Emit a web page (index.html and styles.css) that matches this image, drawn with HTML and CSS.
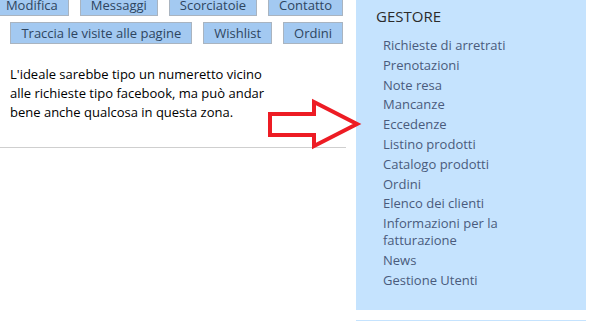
FILE: index.html
```html
<!DOCTYPE html>
<html lang="it">
<head>
  <meta charset="UTF-8" />
  <meta name="viewport" content="width=device-width, initial-scale=1.0"/>
  <title>Gestore</title>
  <link rel="stylesheet" href="styles.css">
</head>
<body>
  <div class="page">
    <div class="main">
      <nav class="toolbar">
        <div class="toolbar-row">
          <a class="tool-btn" href="#">Modifica</a>
          <a class="tool-btn" href="#">Messaggi</a>
          <a class="tool-btn" href="#">Scorciatoie</a>
          <a class="tool-btn" href="#">Contatto</a>
        </div>
        <div class="toolbar-row">
          <a class="tool-btn" href="#">Traccia le visite alle pagine</a>
          <a class="tool-btn" href="#">Wishlist</a>
          <a class="tool-btn" href="#">Ordini</a>
        </div>
      </nav>

      <p class="note">L'ideale sarebbe tipo un numeretto vicino alle richieste tipo facebook, ma può andar bene anche qualcosa in questa zona.</p>

      <hr class="divider">
    </div>

    <aside class="sidebar">
      <div class="panel">
        <h2 class="panel-title">GESTORE</h2>
        <ul class="menu">
          <li><a href="#">Richieste di arretrati</a></li>
          <li><a href="#">Prenotazioni</a></li>
          <li><a href="#">Note resa</a></li>
          <li><a href="#">Mancanze</a></li>
          <li><a href="#">Eccedenze</a></li>
          <li><a href="#">Listino prodotti</a></li>
          <li><a href="#">Catalogo prodotti</a></li>
          <li><a href="#">Ordini</a></li>
          <li><a href="#">Elenco dei clienti</a></li>
          <li><a href="#">Informazioni per la fatturazione</a></li>
          <li><a href="#">News</a></li>
          <li><a href="#">Gestione Utenti</a></li>
        </ul>
      </div>
      <div class="panel panel-next"></div>
    </aside>
  </div>

  <svg class="arrow" width="96" height="54" viewBox="0 0 96 54">
    <polygon points="4,16 48,16 48,4 91,26 48,48 48,37 4,37" fill="none" stroke="#ed1c24" stroke-width="4" stroke-linejoin="miter"/>
  </svg>
</body>
</html>
```

FILE: styles.css
```css
body {
  margin: 0;
  font-family: 'Open Sans', 'Noto Sans', sans-serif;
  color: #111;
  background: #fff;
  overflow: hidden;
}

.page {
  display: grid;
  grid-template-columns: 346px 230px;
  column-gap: 10px;
}

.toolbar {
  display: flex;
  flex-direction: column;
  gap: 6px;
  margin-top: -6px;
  margin-right: 3px;
}

.toolbar-row {
  display: flex;
  justify-content: flex-end;
  gap: 11px;
}

.tool-btn {
  display: block;
  flex-shrink: 0;
  height: 20px;
  line-height: 20px;
  padding: 0 10px;
  font-size: 13px;
  color: #2e4560;
  text-decoration: none;
  background: #a3c9f1;
  border: 1px solid #a9b4c0;
  white-space: nowrap;
}

.note {
  margin: 21px 0 0 10px;
  width: 266px;
  font-size: 13px;
  line-height: 19px;
  color: #000;
}

.divider {
  margin: 25px 0 0;
  border: none;
  border-top: 1px solid #cfcfcf;
}

.panel {
  background: #c5e3fe;
  height: 310px;
  padding: 4px 0 0 20px;
  box-sizing: border-box;
}

.panel-next {
  height: 10px;
  margin-top: 10px;
}

.panel-title {
  margin: 0;
  font-size: 15px;
  font-weight: normal;
  line-height: 24px;
  color: #2b2b2b;
}

.menu {
  list-style: none;
  margin: 9px 0 0;
  padding: 0 0 0 7px;
  width: 150px;
}

.menu li {
  font-size: 13px;
  line-height: 17px;
  margin-bottom: 2.8px;
}

.menu a {
  color: #4a5b7c;
  text-decoration: none;
}

.arrow {
  position: absolute;
  left: 266px;
  top: 98px;
}
```
